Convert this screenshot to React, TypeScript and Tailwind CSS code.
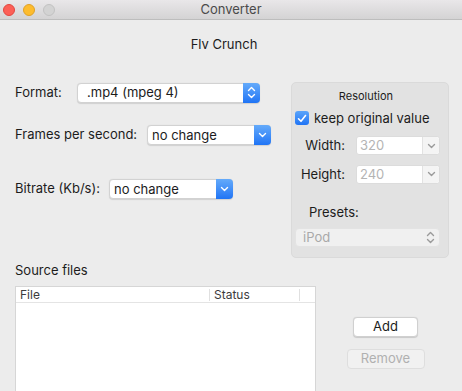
import React from "react";

const Chevron = ({ color = "white" }: { color?: string }) => (
  <svg width="9" height="6" viewBox="0 0 9 6" fill="none">
    <path d="M1.5 1.5 L4.5 4.5 L7.5 1.5" stroke={color} strokeWidth="1.4" strokeLinecap="round" strokeLinejoin="round" />
  </svg>
);

const UpDown = ({ color = "white" }: { color?: string }) => (
  <svg width="9" height="13" viewBox="0 0 9 13" fill="none">
    <path d="M1.5 4.5 L4.5 1.5 L7.5 4.5" stroke={color} strokeWidth="1.4" strokeLinecap="round" strokeLinejoin="round" />
    <path d="M1.5 8.5 L4.5 11.5 L7.5 8.5" stroke={color} strokeWidth="1.4" strokeLinecap="round" strokeLinejoin="round" />
  </svg>
);

const Popup = ({ value, width, double, pad }: { value: string; width: string; double?: boolean; pad: string }) => (
  <div
    className={`${width} h-[20px] flex items-stretch bg-white rounded-[4px] border border-[#d2d2d2] shadow-[0_0.5px_1px_rgba(0,0,0,0.12)]`}
  >
    <div className={`flex-1 flex items-center ${pad} leading-none`}>{value}</div>
    <div className="w-[17px] -my-px -mr-px rounded-r-[4px] bg-linear-to-b from-[#64aafa] to-[#1f74f5] flex items-center justify-center">
      {double ? <UpDown /> : <Chevron />}
    </div>
  </div>
);

const NumField = ({ value }: { value: string }) => (
  <div className="w-[84px] h-[19px] flex items-stretch bg-white rounded-[3px] border border-[#dcdcdc]">
    <div className="flex-1 flex items-center pl-[3px] text-[#b4b4b4] leading-none">{value}</div>
    <div className="w-[17px] flex items-center justify-center bg-[#f4f4f4] border-l border-[#e2e2e2] rounded-r-[3px]">
      <Chevron color="#9a9a9a" />
    </div>
  </div>
);

export default function App() {
  return (
    <div className="w-[462px] h-[391px] overflow-hidden bg-[#ececec] text-[13px] text-[#1c1c1c] font-[Inter,sans-serif]">
      {/* title bar */}
      <div className="relative h-[20px] flex items-center justify-center bg-linear-to-b from-[#e9e7e9] to-[#d4d3d4] border-b border-[#bdbdbd]">
        <div className="absolute left-[3px] top-[4px] flex gap-[8px]">
          <span className="w-[12px] h-[12px] rounded-full bg-[#fc5f57] border border-[#e2463f]" />
          <span className="w-[12px] h-[12px] rounded-full bg-[#fdbc2e] border border-[#e0a126]" />
          <span className="w-[12px] h-[12px] rounded-full bg-[#d3d3d3] border border-[#c2c2c2]" />
        </div>
        <span className="text-[#4a4a4a] text-[13px]">Converter</span>
      </div>

      <div className="mt-[16px] text-center leading-[16px] pr-[14px]">Flv Crunch</div>

      <div className="mt-[30px] flex items-start">
        <div className="pl-[15px] w-[291px] flex flex-col">
          <div className="flex items-center h-[21px]">
            <span className="w-[62px]">Format:</span>
            <Popup value=".mp4 (mpeg 4)" width="w-[183px]" double pad="pl-[9px]" />
          </div>
          <div className="mt-[22px] flex items-center h-[20px]">
            <span className="w-[132px]">Frames per second:</span>
            <Popup value="no change" width="w-[124px]" pad="pl-[4px]" />
          </div>
          <div className="mt-[34px] flex items-center h-[20px]">
            <span className="w-[94px]">Bitrate (Kb/s):</span>
            <Popup value="no change" width="w-[124px]" pad="pl-[4px]" />
          </div>
        </div>

        <div className="w-[158px] h-[176px] rounded-[5px] bg-[#e2e2e2] border border-[#dadada] flex flex-col">
          <div className="mt-[6px] text-center text-[11px] leading-[14px] pr-[8px]">Resolution</div>
          <div className="mt-[7px] ml-[3px] flex items-center gap-[5px]">
            <span className="w-[14px] h-[14px] rounded-[3px] bg-linear-to-b from-[#5aa4fa] to-[#1f74f5] flex items-center justify-center">
              <svg width="10" height="9" viewBox="0 0 10 9" fill="none">
                <path d="M1.5 4.8 L4 7.3 L8.5 1.5" stroke="white" strokeWidth="1.6" strokeLinecap="round" strokeLinejoin="round" />
              </svg>
            </span>
            <span className="leading-[16px]">keep original value</span>
          </div>
          <div className="mt-[10px] flex items-center">
            <span className="w-[53px] text-right">Width:</span>
            <span className="ml-[11px]"><NumField value="320" /></span>
          </div>
          <div className="mt-[9px] flex items-center">
            <span className="w-[53px] text-right">Height:</span>
            <span className="ml-[11px]"><NumField value="240" /></span>
          </div>
          <div className="mt-[20px] ml-[17px] leading-[16px]">Presets:</div>
          <div className="mt-[8px] ml-[3px] w-[145px] h-[19px] flex items-center justify-between bg-[#f0f0f0] border border-[#e3e3e3] rounded-[4px] pl-[7px] pr-[4px] text-[#a9a9a9]">
            <span className="leading-none">iPod</span>
            <UpDown color="#9a9a9a" />
          </div>
        </div>
      </div>

      <div className="mt-[4px] pl-[15px] leading-[16px]">Source files</div>

      <div className="mt-[8px] flex items-start">
        <div className="ml-[15px] w-[301px] h-[120px] bg-white border border-[#d6d6d6]">
          <div className="h-[16px] flex items-center border-b border-[#e4e4e4] text-[12px] text-[#3c3c3c]">
            <span className="w-[194px] pl-[4px] border-r border-[#e0e0e0] leading-[12px]">File</span>
            <span className="w-[90px] pl-[4px] border-r border-[#e0e0e0] leading-[12px]">Status</span>
          </div>
        </div>
        <div className="flex-1 flex flex-col items-center pt-[31px] pr-[7px]">
          <div className="w-[65px] h-[20px] flex items-center justify-center bg-white rounded-[4px] border border-[#d0d0d0] shadow-[0_0.5px_1px_rgba(0,0,0,0.15)]">
            Add
          </div>
          <div className="mt-[12px] w-[78px] h-[20px] flex items-center justify-center bg-[#f1f1f1] rounded-[4px] border border-[#dedede] text-[#b0b0b0]">
            Remove
          </div>
        </div>
      </div>
    </div>
  );
}
